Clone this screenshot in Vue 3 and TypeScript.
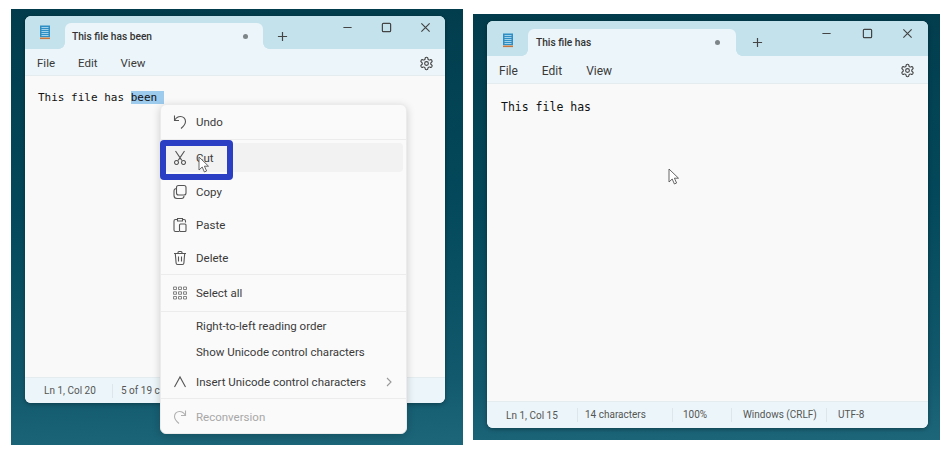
<template>
  <div class="page">
    <section
      v-for="win in windows"
      :key="win.id"
      class="desktop"
      :class="win.id"
    >
      <div class="window">
        <header class="titlebar">
          <div class="app-icon">
            <svg viewBox="0 0 12 15" width="12" height="15">
              <rect x="1" y="0.5" width="10" height="11.500" fill="#2f8fc4" />
              <path d="M2.500 2.500h7M2.500 4.500h7M2.500 6.500h7M2.500 8.500h7M2.500 10.500h7" stroke="#bfe3f2" stroke-width="0.8" />
              <rect x="1" y="12.500" width="10" height="1.600" fill="#c8743a" />
            </svg>
          </div>
          <div class="tab">
            <span class="tab-title">{{ win.text }}</span>
            <span class="tab-dot"></span>
          </div>
          <div class="new-tab">
            <svg viewBox="0 0 12 12" width="11" height="11">
              <path d="M6 1v10M1 6h10" class="line" />
            </svg>
          </div>
          <div class="caption">
            <button>
              <svg viewBox="0 0 12 12" width="11" height="11"><path d="M1.500 6h9" class="line" /></svg>
            </button>
            <button>
              <svg viewBox="0 0 12 12" width="11" height="11"><rect x="1.500" y="1.500" width="9" height="9" rx="1" class="line" /></svg>
            </button>
            <button>
              <svg viewBox="0 0 12 12" width="11" height="11"><path d="M1.500 1.500l9 9M10.500 1.500l-9 9" class="line" /></svg>
            </button>
          </div>
        </header>

        <nav class="menubar">
          <span>File</span>
          <span>Edit</span>
          <span>View</span>
          <svg class="gear" viewBox="0 0 24 24" width="15" height="15">
            <path class="line" d="M12.200 2h-.4a2 2 0 0 0-2 2v.2a2 2 0 0 1-1 1.700l-.4.3a2 2 0 0 1-2 0l-.2-.1a2 2 0 0 0-2.700.7l-.2.4a2 2 0 0 0 .7 2.700l.2.1a2 2 0 0 1 1 1.700v.6a2 2 0 0 1-1 1.700l-.2.1a2 2 0 0 0-.7 2.700l.2.4a2 2 0 0 0 2.700.7l.2-.1a2 2 0 0 1 2 0l.4.3a2 2 0 0 1 1 1.700v.2a2 2 0 0 0 2 2h.4a2 2 0 0 0 2-2v-.2a2 2 0 0 1 1-1.700l.4-.3a2 2 0 0 1 2 0l.2.1a2 2 0 0 0 2.700-.7l.2-.4a2 2 0 0 0-.7-2.700l-.2-.1a2 2 0 0 1-1-1.700v-.6a2 2 0 0 1 1-1.700l.2-.1a2 2 0 0 0 .7-2.700l-.2-.4a2 2 0 0 0-2.700-.7l-.2.1a2 2 0 0 1-2 0l-.4-.3a2 2 0 0 1-1-1.700V4a2 2 0 0 0-2-2z" />
            <circle class="line" cx="12" cy="12" r="3" />
          </svg>
        </nav>

        <main class="editor">
          <span>{{ win.plain }}</span><span v-if="win.selected" class="selection">{{ win.selected }}</span>
        </main>

        <footer class="statusbar">
          <span
            v-for="item in win.status"
            :key="item.label"
            class="cell"
            :style="{ width: item.width + 'px', paddingLeft: item.pad + 'px' }"
          >{{ item.label }}</span>
        </footer>
      </div>

      <svg class="pointer" :style="win.pointer" viewBox="0 0 12 18" width="12" height="18">
        <path d="M1 1v13l3.200-3 2.200 5 2.200-1-2.200-4.800H10.500z" fill="#fff" stroke="#555" stroke-width="0.9" stroke-linejoin="round" />
      </svg>

      <div v-if="win.id === 'before'" class="context-menu">
        <template v-for="row in menu" :key="row.label">
          <div class="menu-row" :class="[row.size, { disabled: row.disabled }]">
            <svg v-if="row.icon" :class="row.icon" viewBox="0 0 16 16" width="16" height="16">
              <path class="line" :d="icons[row.icon]" />
            </svg>
            <span class="menu-label">{{ row.label }}</span>
            <svg v-if="row.more" class="more" viewBox="0 0 8 10" width="8" height="10">
              <path class="line" d="M2 1l4 4-4 4" />
            </svg>
          </div>
          <div v-if="row.divider" class="divider"></div>
        </template>
      </div>
      <div v-if="win.id === 'before'" class="callout"></div>
    </section>
  </div>
</template>

<script setup lang="ts">
interface StatusItem {
  label: string;
  width: number;
  pad: number;
}

interface MenuRow {
  label: string;
  icon?: string;
  size: string;
  disabled?: boolean;
  more?: boolean;
  divider?: boolean;
}

const windows = [
  {
    id: "before",
    text: "This file has been",
    plain: "This file has ",
    selected: "been ",
    pointer: { left: "187px", top: "147px" },
    status: [
      { label: "Ln 1, Col 20", width: 68, pad: 0 },
      { label: "5 of 19 characters", width: 100, pad: 8 },
    ] as StatusItem[],
  },
  {
    id: "after",
    text: "This file has",
    plain: "This file has",
    selected: "",
    pointer: { left: "195px", top: "154px" },
    status: [
      { label: "Ln 1, Col 15", width: 71, pad: 0 },
      { label: "14 characters", width: 95, pad: 7 },
      { label: "100%", width: 59, pad: 10 },
      { label: "Windows (CRLF)", width: 95, pad: 11 },
      { label: "UTF-8", width: 80, pad: 11 },
    ] as StatusItem[],
  },
];

const icons: Record<string, string> = {
  undo: "M2.500 1.500v5h4.500M2.500 6.500C4 3.800 6 2.500 8.500 2.500c2.800 0 5 2.200 5 5 0 2.500-1.500 4.500-4.500 7",
  cut: "M3.500 1l6.300 9.400M12.500 1L6.200 10.400M4.500 10.500a2 2 0 1 0 .01 0zM11.500 10.500a2 2 0 1 0 .01 0z",
  copy: "M6.500 1.500h5.500a2 2 0 0 1 2 2v5.500a2 2 0 0 1-2 2H6.500a2 2 0 0 1-2-2V3.500a2 2 0 0 1 2-2zM4.500 4.500a2.500 2.500 0 0 0-2.500 2.500v4.500a3 3 0 0 0 3 3h4.500a2.500 2.500 0 0 0 2.500-2.500",
  paste: "M5 2.500H3.500a1.500 1.500 0 0 0-1.500 1.500v9a1.500 1.500 0 0 0 1.500 1.500H7M11 2.500h1a1.500 1.500 0 0 1 1.500 1.500v1.500M5.500 1.500h5v2.500h-5zM8.500 7h4.500a1 1 0 0 1 1 1v5.500a1 1 0 0 1-1 1H8.500a1 1 0 0 1-1-1V8a1 1 0 0 1 1-1z",
  trash: "M2 3.500h12M6 3.500V2.500a1 1 0 0 1 1-1h2a1 1 0 0 1 1 1v1M3.300 3.500l.8 9.500a1.500 1.500 0 0 0 1.500 1.500h4.800a1.500 1.500 0 0 0 1.500-1.500l.8-9.500M6.500 6.500v5M9.500 6.500v5",
  select: "M1.500 2h3v2.500h-3zM6.500 2h3v2.500h-3zM11.500 2h3v2.500h-3zM1.500 6.800h3v2.500h-3zM6.500 6.800h3v2.500h-3zM11.500 6.800h3v2.500h-3zM1.500 11.500h3v2.500h-3zM6.500 11.500h3v2.500h-3zM11.500 11.500h3v2.500h-3z",
  insert: "M2.500 13L8 3l5.500 10",
  reconvert: "M13.500 1.500v5H9M13.500 6.500C12 3.800 10 2.500 7.500 2.500c-2.800 0-5 2.200-5 5 0 2.500 1.500 4.500 4.500 7",
};

const menu: MenuRow[] = [
  { label: "Undo", icon: "undo", size: "first", divider: true },
  { label: "Cut", icon: "cut", size: "hovered" },
  { label: "Copy", icon: "copy", size: "tall" },
  { label: "Paste", icon: "paste", size: "tall" },
  { label: "Delete", icon: "trash", size: "tall", divider: true },
  { label: "Select all", icon: "select", size: "select-row", divider: true },
  { label: "Right-to-left reading order", size: "short top" },
  { label: "Show Unicode control characters", size: "short" },
  { label: "Insert Unicode control characters", icon: "insert", size: "tall", more: true, divider: true },
  { label: "Reconversion", icon: "reconvert", size: "last", disabled: true },
];
</script>

<style>
html,
body {
  background: #fff;
  overflow: hidden;
}
</style>

<style scoped>
.page {
  display: flex;
  align-items: flex-start;
  gap: 10px;
  width: 950px;
  height: 458px;
  padding-left: 11px;
  box-sizing: border-box;
  font-family: Roboto, "Noto Sans", sans-serif;
  color: #3a3a3a;
}

.desktop {
  position: relative;
  box-sizing: border-box;
  background: linear-gradient(178deg, #023c4c 0%, #03495b 45%, #12596d 85%, #1d6679 100%);
}

.desktop.before {
  width: 452px;
  height: 436px;
  margin-top: 9px;
  padding: 7px 18px 0 14px;
}

.desktop.after {
  width: 467px;
  height: 426px;
  margin-top: 14px;
  padding: 7px 12px 0 14px;
}

.window {
  display: flex;
  flex-direction: column;
  border-radius: 6px;
  overflow: hidden;
  background: #f9f9f9;
  box-shadow: 0 1px 4px rgba(0, 0, 0, 0.35);
}

.before .window {
  height: 387px;
}

.after .window {
  height: 407px;
}

.titlebar {
  display: flex;
  align-items: flex-end;
  flex: none;
  background: #c4e2ec;
}

.before .titlebar {
  height: 33px;
}

.after .titlebar {
  height: 35px;
}

.app-icon {
  display: flex;
  align-items: center;
  justify-content: center;
  align-self: stretch;
  width: 40px;
}

.after .app-icon {
  width: 41px;
  padding-top: 3px;
}

.tab {
  position: relative;
  display: flex;
  align-items: center;
  justify-content: space-between;
  box-sizing: border-box;
  background: #ecf5f9;
  border-radius: 6px 6px 0 0;
  font-size: 10.2px;
  font-weight: 500;
  color: #333;
}

.before .tab {
  width: 198px;
  height: 26px;
  padding: 0 15px 0 7px;
}

.after .tab {
  width: 208px;
  height: 27px;
  padding: 0 16px 0 8px;
}

.tab::before,
.tab::after {
  content: "";
  position: absolute;
  bottom: 0;
  width: 6px;
  height: 6px;
}

.tab::before {
  left: -6px;
  background: radial-gradient(circle at 0 0, #c4e2ec 5.5px, #ecf5f9 6px);
}

.tab::after {
  right: -6px;
  background: radial-gradient(circle at 100% 0, #c4e2ec 5.5px, #ecf5f9 6px);
}

.tab-dot {
  width: 5px;
  height: 5px;
  border-radius: 50%;
  background: #7d8589;
}

.new-tab {
  display: flex;
  justify-content: center;
  align-items: center;
  align-self: flex-end;
  width: 38px;
  height: 26px;
}

.after .new-tab {
  width: 42px;
  height: 27px;
}

.caption {
  display: flex;
  align-self: flex-start;
  margin-left: auto;
}

.caption button {
  display: flex;
  align-items: center;
  justify-content: center;
  padding: 0;
  border: 0;
  background: none;
  width: 39px;
  height: 22px;
}

.after .caption button {
  width: 40.5px;
  height: 24px;
}

.line {
  fill: none;
  stroke: #444;
  stroke-width: 1.3;
}

.menubar {
  display: flex;
  align-items: center;
  flex: none;
  box-sizing: border-box;
  padding-top: 2px;
  background: #ecf5f9;
  border-bottom: 1px solid #e4ecef;
  font-size: 11.5px;
}

.before .menubar {
  height: 27px;
  gap: 23px;
  padding-left: 12px;
  padding-right: 12px;
}

.after .menubar {
  height: 28px;
  gap: 24px;
  padding-left: 12px;
  padding-right: 13px;
  font-size: 12px;
}

.gear {
  margin-left: auto;
}

.gear .line {
  stroke-width: 1.8;
}

.before .gear {
  margin-right: -1px;
}

.editor {
  flex: 1;
  font-family: "DejaVu Sans Mono", "Liberation Mono", monospace;
  color: #111;
  white-space: pre;
  line-height: 16px;
}

.before .editor {
  padding: 14px 13px 0;
  font-size: 11px;
}

.after .editor {
  padding: 15px 14px 0;
  font-size: 11.5px;
}

.selection {
  background: #9ccbee;
}

.statusbar {
  display: flex;
  align-items: center;
  flex: none;
  box-sizing: border-box;
  padding-left: 19px;
  background: #ecf5f9;
  border-top: 1px solid #e4ecef;
  font-size: 10px;
  color: #555;
}

.before .statusbar {
  height: 26px;
}

.after .statusbar {
  height: 27px;
}

.cell {
  flex: none;
  box-sizing: border-box;
  white-space: nowrap;
}

.cell + .cell {
  border-left: 1px solid #dde6ea;
  line-height: 14px;
}

.pointer {
  position: absolute;
  z-index: 3;
}

.context-menu {
  position: absolute;
  z-index: 1;
  left: 149px;
  top: 95px;
  box-sizing: border-box;
  width: 247px;
  height: 330px;
  background: #fafafa;
  border: 1px solid #ebebeb;
  border-radius: 6px;
  box-shadow: 0 2px 8px rgba(0, 0, 0, 0.18);
  font-size: 11.5px;
}

.menu-row {
  display: flex;
  align-items: center;
  gap: 8px;
  padding-left: 11px;
  white-space: nowrap;
}

.menu-row .line {
  stroke: #555;
  stroke-width: 1.1;
}

.menu-row.first {
  height: 34px;
}

.menu-row.tall {
  height: 33px;
}

.menu-row.hovered {
  height: 29px;
  margin: 3px 3px 3px 4px;
  padding-left: 7px;
  border-radius: 4px;
  background: #f2f2f2;
}

.menu-row.select-row {
  height: 36px;
}

.menu-row.short {
  height: 26px;
  padding-left: 35px;
}

.menu-row.short.top {
  height: 27px;
}

.menu-row.last {
  height: 35px;
}

.menu-row.disabled {
  color: #a8a8a8;
}

.menu-row.disabled .line {
  stroke: #b0b0b0;
}

.select .line {
  stroke: #777;
  stroke-width: 0.9;
}

.more {
  margin-left: auto;
  margin-right: 13px;
}

.menu-row .more .line {
  stroke: #999;
}

.divider {
  height: 1px;
  background: #ececec;
}

.callout {
  position: absolute;
  z-index: 2;
  left: 149px;
  top: 131px;
  box-sizing: border-box;
  width: 73px;
  height: 40px;
  border: 6px solid #2a3fc4;
  border-radius: 4px;
}
</style>
